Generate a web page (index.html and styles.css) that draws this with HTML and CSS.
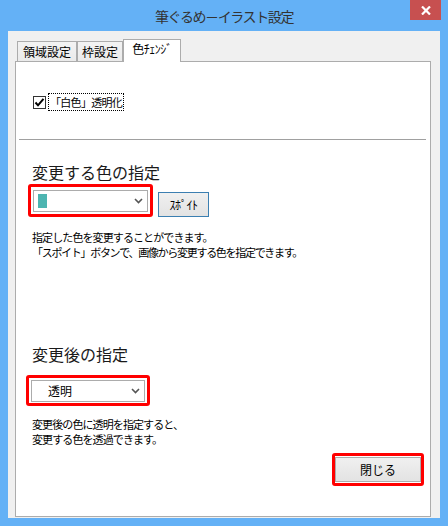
FILE: index.html
```html
<!DOCTYPE html>
<html lang="ja">
<head>
<meta charset="utf-8">
<title>筆ぐるめ－イラスト設定</title>
<link rel="stylesheet" href="styles.css">
</head>
<body>
<div class="window">
  <div class="titlebar">
    <div></div>
    <div class="title">筆ぐるめ－イラスト設定</div>
    <div class="close">
      <svg width="10" height="9" viewBox="0 0 10 9"><path d="M1 0.5 L9 8.5 M9 0.5 L1 8.5" stroke="#fff" stroke-width="2.2" fill="none"/></svg>
    </div>
  </div>
  <div class="client">
    <div class="tabs">
      <div class="tab tab-1">領域設定</div>
      <div class="tab tab-2">枠設定</div>
      <div class="tab tab-3 active">色ﾁｪﾝｼﾞ</div>
    </div>
    <div class="panel">
      <div class="check-row">
        <span class="checkbox">
          <svg width="11" height="11" viewBox="0 0 11 11"><path d="M1.5 5.5 L4 8.3 L9.5 1.8" stroke="#000" stroke-width="2" fill="none"/></svg>
        </span>
        <span class="check-label">「白色」透明化</span>
      </div>
      <div class="sep"></div>
      <div class="heading h-1">変更する色の指定</div>
      <div class="row row-1">
        <div class="mark mark-1">
          <div class="select">
            <span class="swatch"></span>
            <svg class="chev" width="9" height="6" viewBox="0 0 9 6"><path d="M1 1 L4.5 4.5 L8 1" stroke="#555" stroke-width="1.6" fill="none"/></svg>
          </div>
        </div>
        <div class="btn spoit">ｽﾎﾟｲﾄ</div>
      </div>
      <div class="desc desc-1">
        <div class="line">指定した色を変更することができます。</div>
        <div class="line tight">「スポイト」ボタンで、画像から変更する色を指定できます。</div>
      </div>
      <div class="heading h-2">変更後の指定</div>
      <div class="row row-2">
        <div class="mark mark-2">
          <div class="select select-2">
            <span class="select-text">透明</span>
            <svg class="chev" width="9" height="6" viewBox="0 0 9 6"><path d="M1 1 L4.5 4.5 L8 1" stroke="#555" stroke-width="1.6" fill="none"/></svg>
          </div>
        </div>
      </div>
      <div class="desc desc-2">
        <div class="line">変更後の色に透明を指定すると、</div>
        <div class="line">変更する色を透過できます。</div>
      </div>
      <div class="actions">
        <div class="mark mark-3">
          <div class="btn close-btn">閉じる</div>
        </div>
      </div>
    </div>
  </div>
</div>
</body>
</html>
```
FILE: styles.css
```css
* { box-sizing: border-box; }
html, body { margin: 0; padding: 0; }
body {
  font-family: "Noto Sans CJK JP", "Noto Sans", sans-serif;
  color: #000;
}
.window {
  width: 448px;
  height: 526px;
  background: #64b1f6;
  display: flex;
  flex-direction: column;
}
.titlebar {
  height: 31px;
  display: grid;
  grid-template-columns: 1fr auto 1fr;
  align-items: center;
}
.title {
  font-size: 14px;
  line-height: 20px;
  letter-spacing: -1.4px;
  color: #333;
}
.close {
  justify-self: end;
  align-self: start;
  margin-right: 7px;
  width: 31px;
  height: 20px;
  background: #c75050;
  display: flex;
  align-items: center;
  justify-content: center;
}
.close svg { display: block; }
.client {
  flex: 1;
  margin: 0 8px 8px;
  background: #f0f0f0;
  padding: 8px 9px 1px 7px;
  display: flex;
  flex-direction: column;
}
.tabs {
  height: 22px;
  display: flex;
  align-items: flex-end;
  padding-left: 2px;
}
.tab {
  height: 20px;
  border: 1px solid #acacac;
  border-bottom: none;
  background: linear-gradient(#f3f3f3, #eaeaea);
  font-size: 12px;
  line-height: 19px;
  text-align: center;
  color: #000;
}
.tab-1 { width: 60px; }
.tab-2 { width: 46px; }
.tab-3 { width: 58px; }
.tab.active {
  height: 23px;
  margin-bottom: -1px;
  background: #fff;
  line-height: 18px;
  position: relative;
  z-index: 1;
  letter-spacing: -0.5px;
}
.panel {
  flex: 1;
  background: #fff;
  border: 1px solid #acacac;
  display: flex;
  flex-direction: column;
}
.check-row {
  margin-top: 31px;
  margin-left: 17px;
  height: 18px;
  display: flex;
  align-items: center;
}
.checkbox {
  width: 13px;
  height: 13px;
  border: 1px solid #333;
  background: #fff;
  display: flex;
  align-items: center;
  justify-content: center;
}
.checkbox svg { display: block; }
.check-label {
  margin-left: 2px;
  border: 1px dotted #000;
  padding: 0 1px;
  font-size: 11px;
  line-height: 16px;
  letter-spacing: -0.7px;
}
.sep {
  height: 1px;
  background: #a0a0a0;
  margin: 28px 4px 0 3px;
}
.heading {
  font-size: 16px;
  line-height: 20px;
  margin-left: 16px;
  color: #1a1a1a;
}
.h-1 { margin-top: 22px; }
.h-2 { margin-top: 84px; }
.row {
  display: flex;
  align-items: flex-start;
}
.row-1 { margin-top: 2px; margin-left: 12px; }
.row-2 { margin-top: 11px; margin-left: 10px; }
.mark {
  border: 3px solid #ff0000;
  border-radius: 3px;
}
.mark-1 { padding: 3px 2px 2px; }
.mark-2 { padding: 2px 2px 1px; }
.mark-3 { padding: 1px 0; }
.select {
  width: 115px;
  height: 22px;
  border: 1px solid #acacac;
  background: #fff;
  display: flex;
  align-items: center;
  padding-left: 4px;
}
.select-2 { width: 114px; }
.swatch {
  width: 9px;
  height: 14px;
  background: #4db5b1;
}
.select-text {
  font-size: 12px;
  line-height: 16px;
  margin-left: 12px;
}
.chev {
  display: block;
  margin-left: auto;
  margin-right: 4px;
}
.btn {
  font-size: 12px;
  line-height: 16px;
  display: flex;
  align-items: center;
  justify-content: center;
  background: linear-gradient(#f0f0f0, #e3e3e3);
  border: 1px solid #acacac;
}
.spoit {
  width: 51px;
  height: 25px;
  margin-left: 5px;
  margin-top: 8px;
  border-color: #3c7fb1;
  letter-spacing: -0.5px;
}
.desc {
  font-size: 11px;
  letter-spacing: -0.9px;
  margin-left: 16px;
  color: #000;
}
.desc .line { white-space: nowrap; height: 15px; line-height: 15px; }
.desc .tight { letter-spacing: -1.3px; }
.desc-1 { margin-top: 13px; }
.desc-2 { margin-top: 11px; }
.actions {
  margin-top: 6px;
  margin-right: 6px;
  display: flex;
  justify-content: flex-end;
}
.close-btn {
  width: 86px;
  height: 25px;
}
```
